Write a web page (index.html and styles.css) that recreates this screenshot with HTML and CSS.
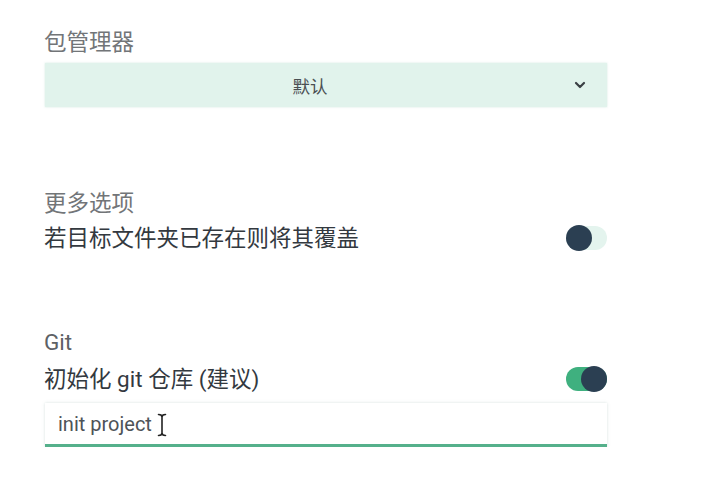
FILE: index.html
```html
<!DOCTYPE html>
<html lang="zh">
<head>
<meta charset="utf-8">
<link rel="stylesheet" href="styles.css">
</head>
<body>
<div class="page">
  <section class="group first">
    <div class="label">包管理器</div>
    <div class="select">
      <span class="select-value">默认</span>
      <svg class="chevron" width="12" height="8" viewBox="0 0 12 8"><path d="M2 2 L6 6 L10 2" fill="none" stroke="#3a3f44" stroke-width="2.2" stroke-linecap="round" stroke-linejoin="round"/></svg>
    </div>
  </section>

  <section class="group more">
    <div class="label">更多选项</div>
    <div class="row">
      <span class="row-text">若目标文件夹已存在则将其覆盖</span>
      <span class="toggle off"><span class="knob"></span></span>
    </div>
  </section>

  <section class="group git">
    <div class="label git-label">Git</div>
    <div class="row row-git">
      <span class="row-text">初始化 git 仓库 (建议)</span>
      <span class="toggle on"><span class="knob"></span></span>
    </div>
    <div class="input">
      <span class="input-text">init project</span>
      <svg class="ibeam" width="10" height="24" viewBox="0 0 10 24"><path d="M1.5 1.5 Q5 1.5 5 4 L5 20 Q5 22.5 1.5 22.5 M8.5 1.5 Q5 1.5 5 4 M5 20 Q5 22.5 8.5 22.5" fill="none" stroke="#222" stroke-width="1.6" stroke-linecap="round"/></svg>
    </div>
  </section>
</div>
</body>
</html>
```
FILE: styles.css
```css
html, body {
  margin: 0;
  padding: 0;
  background: #ffffff;
}
body {
  font-family: Roboto, "Noto Sans CJK SC", sans-serif;
  color: #2f3a43;
}
.page {
  width: 562px;
  padding: 28px 0 0 45px;
}
.label {
  font-size: 22.5px;
  line-height: 28px;
  height: 28px;
  color: #727578;
  margin-left: -1px;
}
.select {
  margin-top: 7px;
  height: 44px;
  background: #e1f3ec;
  display: flex;
  align-items: center;
  justify-content: center;
  position: relative;
  box-shadow: 0 0 2px rgba(180, 220, 205, 0.6);
}
.select-value {
  font-size: 17.5px;
  color: #4a4f53;
  margin-left: -32px;
}
.chevron {
  position: absolute;
  right: 21px;
  top: 18px;
}
.more {
  margin-top: 82px;
}
.row {
  margin-top: 7px;
  height: 28px;
  display: flex;
  align-items: center;
  justify-content: space-between;
}
.row-text {
  font-size: 22.5px;
  line-height: 28px;
  color: #33393f;
  margin-left: -1px;
}
.toggle {
  width: 41px;
  height: 24px;
  border-radius: 12px;
  position: relative;
  display: block;
}
.toggle.off {
  background: #e4f4ee;
}
.toggle.on {
  background: #3fb07f;
}
.knob {
  position: absolute;
  top: -1px;
  width: 26px;
  height: 26px;
  border-radius: 50%;
  background: #2b3f52;
}
.toggle.off .knob {
  left: 0;
}
.toggle.on .knob {
  right: 0;
}
.git {
  margin-top: 76px;
}
.git-label {
  color: #5d6165;
}
.row-git {
  margin-top: 9px;
}
.input {
  margin-top: 10px;
  height: 41px;
  background: #ffffff;
  border-bottom: 3px solid #55b08b;
  box-shadow: 0 0 3px rgba(200, 215, 210, 0.7);
  display: flex;
  align-items: center;
  padding-left: 13px;
  position: relative;
}
.input-text {
  font-size: 20px;
  color: #4e5358;
}
.ibeam {
  position: absolute;
  left: 112px;
  top: 10px;
}
```
